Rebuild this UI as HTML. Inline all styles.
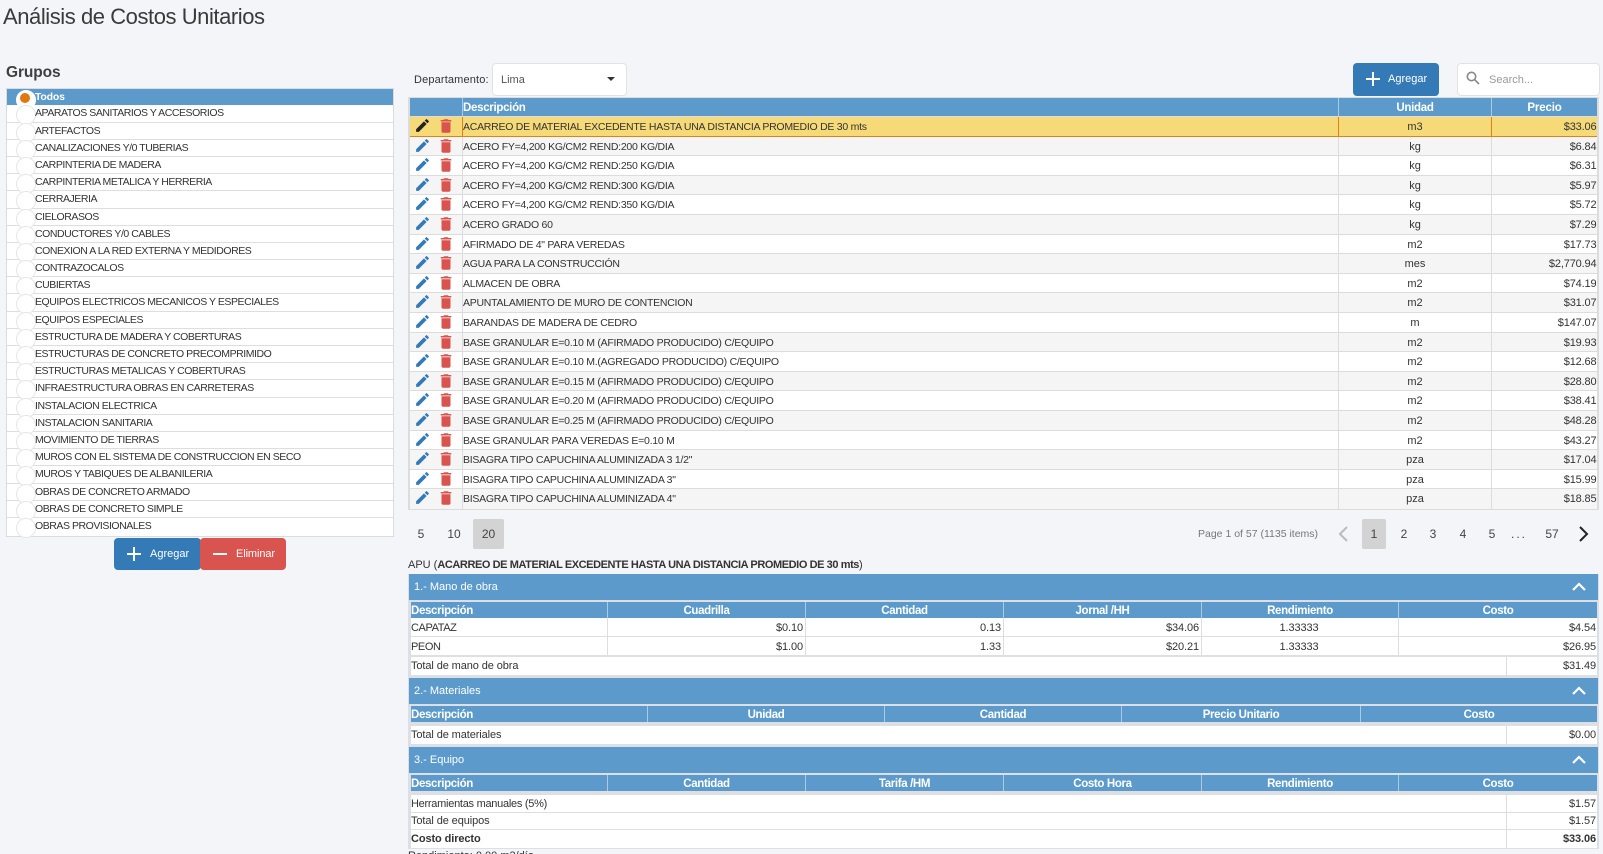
<!DOCTYPE html>
<html lang="es"><head><meta charset="utf-8"><title>Análisis de Costos Unitarios</title>
<style>
*{box-sizing:border-box}
html,body{margin:0;padding:0}
body{width:1603px;height:854px;overflow:hidden;background:#f4f5f9;font-family:"Liberation Sans",sans-serif;font-size:11.5px;color:#333;position:relative}
.a{position:absolute;white-space:nowrap}
h1{position:absolute;left:3px;top:3px;margin:0;font-size:22px;font-weight:400;line-height:28px;color:#3a3a3a;letter-spacing:-.44px}
h2{position:absolute;left:6px;top:63px;margin:0;font-size:15.5px;font-weight:700;line-height:20px;color:#3f3f3f;letter-spacing:-.1px}
.g{position:absolute;left:6px;top:88px;width:388px;height:449px;background:#fff;border:1px solid #dcdcdc}
.g div{height:17.2px;line-height:17px;padding-left:28px;border-bottom:1px solid #dedede;position:relative;white-space:nowrap;font-size:10.5px;letter-spacing:-.45px}
.g div:first-child{background:#5b9acb;color:#fff;font-weight:700;border:0;height:16.4px;line-height:16px;letter-spacing:-.2px}
.g div:last-child{border-bottom:0}
.g div::before{content:"";position:absolute;left:8.5px;top:0;width:18px;height:18px;border-radius:50%;background:#fff;border:1px solid #e6e6e6;z-index:1}
.g div:first-child::before{top:.5px;background:#fff;border-color:#fff}
.g div:first-child::after{content:"";position:absolute;left:12.5px;top:4px;width:10px;height:10px;border-radius:50%;background:#e2760f;z-index:2}
.g span{position:relative;z-index:3}
.btn{position:absolute;color:#fff;border-radius:4px;font-size:11px;text-align:left}
.btn svg{position:absolute}
.btn span{position:absolute;top:0;line-height:33px}
.box{position:absolute;background:#fff;border:1px solid #e2e2e2;border-radius:4px}
.t{position:absolute;left:408px;top:97px;width:1191px;height:413px;background:#fff;border:2px solid #dcdcdc;border-width:1px 2px 1px 2px}
.th{height:19px;display:flex;background:#5b9acb;color:#fff;font-weight:700;line-height:20px;border-bottom:1px solid #dcdcdc;font-size:11.5px;letter-spacing:-.3px}
.r{height:19.6px;display:flex;line-height:20px;border-bottom:1px solid #dcdcdc;white-space:nowrap;font-size:11px}
.r:nth-child(odd){background:#fff}
.r:nth-child(even){background:#f5f5f5}
.r.s{background:#f6da78;border-bottom:1px solid #e0811a}
.r.s>div{border-color:#e0811a}
.r>div,.th>div{flex:none;overflow:hidden}
.c0{width:52px;position:relative}
.c1{width:876px;padding-left:0;border-left:1px solid #dcdcdc}
.r .c1{font-size:10.5px;letter-spacing:-.26px}
.c2{width:153px;text-align:center;border-left:1px solid #dcdcdc}
.c3{width:106px;text-align:right;padding-right:.5px;border-left:1px solid #dcdcdc;letter-spacing:-.15px}
.th .c1,.th .c2,.th .c3{border-left:1px solid #a9cbe6}
.th .c3{text-align:center;padding-right:0}
.c0 svg{position:absolute;top:0}
.c0 svg:first-child{left:4px;fill:#337ab7}
.c0 svg:last-child{left:27px;fill:#d9534f}
.s .c0 svg:first-child{fill:#222}
.pg{position:absolute;top:519px;height:30px;line-height:30px;text-align:center;font-size:12px;color:#444}
.on{background:#d3d3d3;border-radius:2px}
.apu{position:absolute;left:408px;top:574px;width:1191px;height:275px;background:#dcdfe3}
.p{position:absolute;left:1px;width:1189px;height:26px;background:#5b9acb;color:#fff;font-size:11px;line-height:26px;padding-left:5px}
.p svg{position:absolute;left:1163px;top:8px}
.h{position:absolute;left:3px;width:1186px;height:16px;background:#5b9acb;color:#fff;font-weight:700;line-height:19px;display:flex;font-size:11.5px;letter-spacing:-.35px}
.h div{flex:none;text-align:center;border-left:1px solid #a9cbe6;height:16px}
.h div:first-child{text-align:left;border:0;padding-left:0}
.w{position:absolute;left:3px;width:1186px;background:#fff;display:flex;font-size:11px;line-height:18px;white-space:nowrap;border-bottom:1px solid #dedede;letter-spacing:-.1px}
.w div{flex:none;height:100%;border-left:1px solid #dedede;text-align:right;padding-right:2px}
.w div:first-child{border:0;text-align:left;padding:0}
.w div:last-child{padding-right:1px}
.w .m{text-align:center}
</style></head><body>
<svg width="0" height="0" style="position:absolute"><defs>
<symbol id="e" viewBox="0 0 24 24"><path d="M3 17.25V21h3.75L17.81 9.94l-3.75-3.75L3 17.25zM20.71 7.04c.39-.39.39-1.02 0-1.41l-2.34-2.34c-.39-.39-1.02-.39-1.41 0l-1.83 1.83 3.75 3.75 1.83-1.83z"/></symbol>
<symbol id="d" viewBox="0 0 24 24"><path d="M6 19c0 1.1.9 2 2 2h8c1.1 0 2-.9 2-2V7H6v12zM19 4h-3.5l-1-1h-5l-1 1H5v2h14V4z"/></symbol>
</defs></svg>

<h1>Análisis de Costos Unitarios</h1>
<h2>Grupos</h2>
<div class="g">
<div><span>Todos</span></div>
<div><span>APARATOS SANITARIOS Y ACCESORIOS</span></div>
<div><span>ARTEFACTOS</span></div>
<div><span>CANALIZACIONES Y/0 TUBERIAS</span></div>
<div><span>CARPINTERIA DE MADERA</span></div>
<div><span>CARPINTERIA METALICA Y HERRERIA</span></div>
<div><span>CERRAJERIA</span></div>
<div><span>CIELORASOS</span></div>
<div><span>CONDUCTORES Y/0 CABLES</span></div>
<div><span>CONEXION A LA RED EXTERNA Y MEDIDORES</span></div>
<div><span>CONTRAZOCALOS</span></div>
<div><span>CUBIERTAS</span></div>
<div><span>EQUIPOS ELECTRICOS MECANICOS Y ESPECIALES</span></div>
<div><span>EQUIPOS ESPECIALES</span></div>
<div><span>ESTRUCTURA DE MADERA Y COBERTURAS</span></div>
<div><span>ESTRUCTURAS DE CONCRETO PRECOMPRIMIDO</span></div>
<div><span>ESTRUCTURAS METALICAS Y COBERTURAS</span></div>
<div><span>INFRAESTRUCTURA OBRAS EN CARRETERAS</span></div>
<div><span>INSTALACION ELECTRICA</span></div>
<div><span>INSTALACION SANITARIA</span></div>
<div><span>MOVIMIENTO DE TIERRAS</span></div>
<div><span>MUROS CON EL SISTEMA DE CONSTRUCCION EN SECO</span></div>
<div><span>MUROS Y TABIQUES DE ALBANILERIA</span></div>
<div><span>OBRAS DE CONCRETO ARMADO</span></div>
<div><span>OBRAS DE CONCRETO SIMPLE</span></div>
<div><span>OBRAS PROVISIONALES</span></div>
</div>

<div class="btn" style="left:114px;top:538px;width:87px;height:32px;background:#337ab7"><svg style="left:13px;top:9px" width="14" height="14"><path d="M7 0v14M0 7h14" stroke="#fff" stroke-width="2"/></svg><span style="left:36px;line-height:32px">Agregar</span></div>
<div class="btn" style="left:200px;top:538px;width:86px;height:32px;background:#d9534f"><svg style="left:13px;top:9px" width="14" height="14"><path d="M0 7h14" stroke="#fff" stroke-width="2"/></svg><span style="left:36px;line-height:32px;letter-spacing:-.1px">Eliminar</span></div>

<div class="a" style="left:414px;top:72px;line-height:16px;font-size:11px;letter-spacing:.15px">Departamento:</div>
<div class="box" style="left:492px;top:63px;width:135px;height:33px"></div>
<div class="a" style="left:501px;top:72px;line-height:16px;font-size:11px;color:#555">Lima</div>
<svg class="a" style="left:607px;top:77px" width="8" height="4"><path d="M0 0h8L4 4z" fill="#333"/></svg>

<div class="btn" style="left:1353px;top:63px;width:86px;height:33px;background:#337ab7"><svg style="left:13px;top:9px" width="14" height="14"><path d="M7 0v14M0 7h14" stroke="#fff" stroke-width="2"/></svg><span style="left:35px">Agregar</span></div>
<div class="box" style="left:1457px;top:63px;width:143px;height:33px"></div>
<svg class="a" style="left:1466px;top:71px" width="14" height="14" fill="none" stroke="#888" stroke-width="1.6"><circle cx="5.5" cy="5.5" r="4.2"/><path d="M8.6 8.6l4.4 4.4"/></svg>
<div class="a" style="left:1489px;top:72px;line-height:16px;font-size:11px;color:#999">Search...</div>

<div class="t">
<div class="th"><div class="c0"></div><div class="c1">Descripción</div><div class="c2">Unidad</div><div class="c3">Precio</div></div>
<div>
<div class="r s"><div class="c0"><svg width="17" height="17"><use href="#e"/></svg><svg width="18" height="18"><use href="#d"/></svg></div><div class="c1">ACARREO DE MATERIAL EXCEDENTE HASTA UNA DISTANCIA PROMEDIO DE 30 mts</div><div class="c2">m3</div><div class="c3">$33.06</div></div>
<div class="r"><div class="c0"><svg width="17" height="17"><use href="#e"/></svg><svg width="18" height="18"><use href="#d"/></svg></div><div class="c1">ACERO FY=4,200 KG/CM2 REND:200 KG/DIA</div><div class="c2">kg</div><div class="c3">$6.84</div></div>
<div class="r"><div class="c0"><svg width="17" height="17"><use href="#e"/></svg><svg width="18" height="18"><use href="#d"/></svg></div><div class="c1">ACERO FY=4,200 KG/CM2 REND:250 KG/DIA</div><div class="c2">kg</div><div class="c3">$6.31</div></div>
<div class="r"><div class="c0"><svg width="17" height="17"><use href="#e"/></svg><svg width="18" height="18"><use href="#d"/></svg></div><div class="c1">ACERO FY=4,200 KG/CM2 REND:300 KG/DIA</div><div class="c2">kg</div><div class="c3">$5.97</div></div>
<div class="r"><div class="c0"><svg width="17" height="17"><use href="#e"/></svg><svg width="18" height="18"><use href="#d"/></svg></div><div class="c1">ACERO FY=4,200 KG/CM2 REND:350 KG/DIA</div><div class="c2">kg</div><div class="c3">$5.72</div></div>
<div class="r"><div class="c0"><svg width="17" height="17"><use href="#e"/></svg><svg width="18" height="18"><use href="#d"/></svg></div><div class="c1">ACERO GRADO 60</div><div class="c2">kg</div><div class="c3">$7.29</div></div>
<div class="r"><div class="c0"><svg width="17" height="17"><use href="#e"/></svg><svg width="18" height="18"><use href="#d"/></svg></div><div class="c1">AFIRMADO DE 4" PARA VEREDAS</div><div class="c2">m2</div><div class="c3">$17.73</div></div>
<div class="r"><div class="c0"><svg width="17" height="17"><use href="#e"/></svg><svg width="18" height="18"><use href="#d"/></svg></div><div class="c1">AGUA PARA LA CONSTRUCCIÓN</div><div class="c2">mes</div><div class="c3">$2,770.94</div></div>
<div class="r"><div class="c0"><svg width="17" height="17"><use href="#e"/></svg><svg width="18" height="18"><use href="#d"/></svg></div><div class="c1">ALMACEN DE OBRA</div><div class="c2">m2</div><div class="c3">$74.19</div></div>
<div class="r"><div class="c0"><svg width="17" height="17"><use href="#e"/></svg><svg width="18" height="18"><use href="#d"/></svg></div><div class="c1">APUNTALAMIENTO DE MURO DE CONTENCION</div><div class="c2">m2</div><div class="c3">$31.07</div></div>
<div class="r"><div class="c0"><svg width="17" height="17"><use href="#e"/></svg><svg width="18" height="18"><use href="#d"/></svg></div><div class="c1">BARANDAS DE MADERA DE CEDRO</div><div class="c2">m</div><div class="c3">$147.07</div></div>
<div class="r"><div class="c0"><svg width="17" height="17"><use href="#e"/></svg><svg width="18" height="18"><use href="#d"/></svg></div><div class="c1">BASE GRANULAR E=0.10 M (AFIRMADO PRODUCIDO) C/EQUIPO</div><div class="c2">m2</div><div class="c3">$19.93</div></div>
<div class="r"><div class="c0"><svg width="17" height="17"><use href="#e"/></svg><svg width="18" height="18"><use href="#d"/></svg></div><div class="c1">BASE GRANULAR E=0.10 M.(AGREGADO PRODUCIDO) C/EQUIPO</div><div class="c2">m2</div><div class="c3">$12.68</div></div>
<div class="r"><div class="c0"><svg width="17" height="17"><use href="#e"/></svg><svg width="18" height="18"><use href="#d"/></svg></div><div class="c1">BASE GRANULAR E=0.15 M (AFIRMADO PRODUCIDO) C/EQUIPO</div><div class="c2">m2</div><div class="c3">$28.80</div></div>
<div class="r"><div class="c0"><svg width="17" height="17"><use href="#e"/></svg><svg width="18" height="18"><use href="#d"/></svg></div><div class="c1">BASE GRANULAR E=0.20 M (AFIRMADO PRODUCIDO) C/EQUIPO</div><div class="c2">m2</div><div class="c3">$38.41</div></div>
<div class="r"><div class="c0"><svg width="17" height="17"><use href="#e"/></svg><svg width="18" height="18"><use href="#d"/></svg></div><div class="c1">BASE GRANULAR E=0.25 M (AFIRMADO PRODUCIDO) C/EQUIPO</div><div class="c2">m2</div><div class="c3">$48.28</div></div>
<div class="r"><div class="c0"><svg width="17" height="17"><use href="#e"/></svg><svg width="18" height="18"><use href="#d"/></svg></div><div class="c1">BASE GRANULAR PARA VEREDAS E=0.10 M</div><div class="c2">m2</div><div class="c3">$43.27</div></div>
<div class="r"><div class="c0"><svg width="17" height="17"><use href="#e"/></svg><svg width="18" height="18"><use href="#d"/></svg></div><div class="c1">BISAGRA TIPO CAPUCHINA ALUMINIZADA 3 1/2"</div><div class="c2">pza</div><div class="c3">$17.04</div></div>
<div class="r"><div class="c0"><svg width="17" height="17"><use href="#e"/></svg><svg width="18" height="18"><use href="#d"/></svg></div><div class="c1">BISAGRA TIPO CAPUCHINA ALUMINIZADA 3"</div><div class="c2">pza</div><div class="c3">$15.99</div></div>
<div class="r" style="border-bottom:0"><div class="c0"><svg width="17" height="17"><use href="#e"/></svg><svg width="18" height="18"><use href="#d"/></svg></div><div class="c1">BISAGRA TIPO CAPUCHINA ALUMINIZADA 4"</div><div class="c2">pza</div><div class="c3">$18.85</div></div>
</div></div>

<div class="pg" style="left:410px;width:22px">5</div>
<div class="pg" style="left:443px;width:22px">10</div>
<div class="pg on" style="left:473px;width:31px">20</div>
<div class="a" style="left:1198px;top:526px;line-height:16px;font-size:10.5px;color:#777">Page 1 of 57 (1135 items)</div>
<svg class="a" style="left:1338px;top:526px" width="11" height="16" fill="none" stroke="#bbb" stroke-width="2"><path d="M9 1L2 8l7 7"/></svg>
<div class="pg on" style="left:1362px;width:24px">1</div>
<div class="pg" style="left:1392px;width:24px">2</div>
<div class="pg" style="left:1421px;width:24px">3</div>
<div class="pg" style="left:1451px;width:24px">4</div>
<div class="pg" style="left:1480px;width:24px">5</div>
<div class="pg" style="left:1507px;width:24px;letter-spacing:2px">...</div>
<div class="pg" style="left:1540px;width:24px">57</div>
<svg class="a" style="left:1578px;top:526px" width="11" height="16" fill="none" stroke="#222" stroke-width="2"><path d="M2 1l7 7-7 7"/></svg>

<div class="a" style="left:408px;top:557px;line-height:16px;font-size:11px">APU (<b style="letter-spacing:-.42px">ACARREO DE MATERIAL EXCEDENTE HASTA UNA DISTANCIA PROMEDIO DE 30 mts</b>)</div>

<div class="apu">
<div class="p" style="top:0">1.- Mano de obra<svg width="14" height="9" fill="none" stroke="#fff" stroke-width="2.2"><path d="M1 8l6-6 6 6"/></svg></div>
<div class="h" style="top:28px"><div style="width:196px">Descripción</div><div style="width:198px">Cuadrilla</div><div style="width:198px">Cantidad</div><div style="width:198px">Jornal /HH</div><div style="width:197px">Rendimiento</div><div style="width:199px">Costo</div></div>
<div class="w" style="top:44px;height:19px;line-height:21px"><div style="width:196px;letter-spacing:-.4px">CAPATAZ</div><div style="width:198px">$0.10</div><div style="width:198px">0.13</div><div style="width:198px">$34.06</div><div class="m" style="width:197px">1.33333</div><div style="width:199px">$4.54</div></div>
<div class="w" style="top:63px;height:18px;border-bottom:0;line-height:20px"><div style="width:196px;letter-spacing:-.4px">PEON</div><div style="width:198px">$1.00</div><div style="width:198px">1.33</div><div style="width:198px">$20.21</div><div class="m" style="width:197px">1.33333</div><div style="width:199px">$26.95</div></div>
<div class="w" style="top:83px;height:18px;border-bottom:0;line-height:19px"><div style="width:1095px">Total de mano de obra</div><div style="width:91px">$31.49</div></div>

<div class="p" style="top:104px">2.- Materiales<svg width="14" height="9" fill="none" stroke="#fff" stroke-width="2.2"><path d="M1 8l6-6 6 6"/></svg></div>
<div class="h" style="top:132px"><div style="width:236px">Descripción</div><div style="width:237px">Unidad</div><div style="width:237px">Cantidad</div><div style="width:239px">Precio Unitario</div><div style="width:237px">Costo</div></div>
<div class="w" style="top:152px;height:18px;border-bottom:0;line-height:19px"><div style="width:1095px">Total de materiales</div><div style="width:91px">$0.00</div></div>

<div class="p" style="top:173px">3.- Equipo<svg width="14" height="9" fill="none" stroke="#fff" stroke-width="2.2"><path d="M1 8l6-6 6 6"/></svg></div>
<div class="h" style="top:201px"><div style="width:196px">Descripción</div><div style="width:198px">Cantidad</div><div style="width:198px">Tarifa /HM</div><div style="width:198px">Costo Hora</div><div style="width:197px">Rendimiento</div><div style="width:199px">Costo</div></div>
<div class="w" style="top:221px;height:18px;line-height:19px"><div style="width:1095px;letter-spacing:-.27px">Herramientas manuales (5%)</div><div style="width:91px">$1.57</div></div>
<div class="w" style="top:239px;height:17px;line-height:17px"><div style="width:1095px">Total de equipos</div><div style="width:91px">$1.57</div></div>
<div class="w" style="top:256px;height:18px;border-bottom:0;font-weight:700;line-height:19px"><div style="width:1095px">Costo directo</div><div style="width:91px">$33.06</div></div>
</div>
<div class="a" style="left:408px;top:848px;width:300px;line-height:16px;font-size:11px;height:6px;overflow:hidden">Rendimiento: 0.00 m3/día</div>
</body></html>
